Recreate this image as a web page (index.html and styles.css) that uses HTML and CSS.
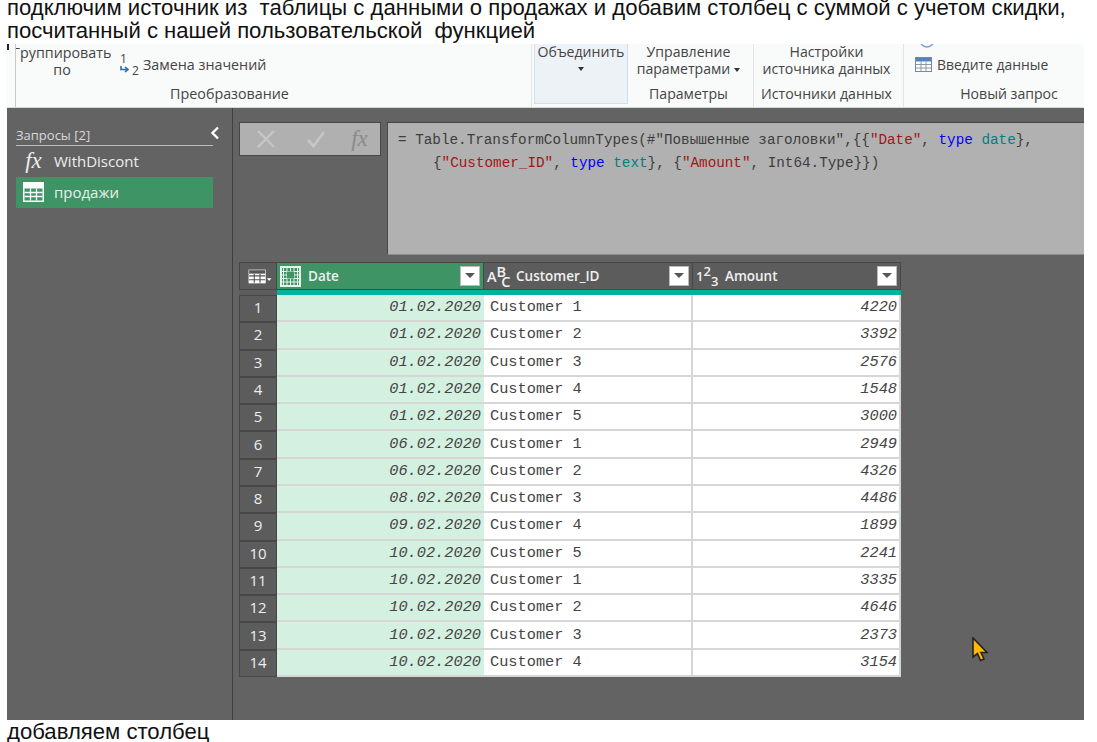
FILE: index.html
```html
<!DOCTYPE html>
<html lang="ru">
<head>
  <meta charset="UTF-8">
  <meta name="viewport" content="width=device-width, initial-scale=1.0">
  <title>Запросы</title>
  <link rel="stylesheet" href="styles.css">
</head>
<body>

<p class="intro">подключим источник из&nbsp; таблицы с данными о продажах и добавим столбец с суммой с учетом скидки, посчитанный с нашей пользовательской&nbsp; функцией</p>

<div class="shot">
  <span class="tick"></span>

  <!-- лента -->
  <div class="ribbon">
    <div class="group group-transform">
      <div class="group-body">
        <div class="btn-group">Группировать<br>по</div>
        <div class="btn-replace">
          <span class="replace-icon">
            <span class="d1">1</span>
            <svg class="replace-arrow" width="10" height="8" viewBox="0 0 10 8"><path d="M1 0v3.500h7M5 1l3 2.500-3 2.500" fill="none" stroke="#2b6cb0" stroke-width="1.6"/></svg>
            <span class="d2">2</span>
          </span>
          Замена значений
        </div>
      </div>
      <div class="group-label label-transform">Преобразование</div>
    </div>
    <div class="group group-merge">
      <div class="merge-btn">Объединить<span class="caret caret-block"></span></div>
    </div>
    <div class="group group-params">
      <div class="group-body center">Управление<br>параметрами<span class="caret"></span></div>
      <div class="group-label">Параметры</div>
    </div>
    <div class="group group-source">
      <div class="group-body center">Настройки<br>источника данных</div>
      <div class="group-label">Источники данных</div>
    </div>
    <div class="group group-new">
      <svg class="clip-icon" width="14" height="5" viewBox="0 0 14 5"><path d="M1 0q6 6 12 0" fill="none" stroke="#7d9cc4" stroke-width="1.5"/></svg>
      <div class="group-body enter">
        <svg width="17" height="15" viewBox="0 0 17 15"><rect x=".5" y=".5" width="16" height="14" fill="#fff" stroke="#7b8794"/><rect x="1" y="1" width="15" height="3.500" fill="#4a86c5"/><path d="M1 7.500h15M1 11h15M6 4.500v10M11 4.500v10" stroke="#8b98a6"/></svg>
        Введите данные
      </div>
      <div class="group-label label-new">Новый запрос</div>
    </div>
  </div>

  <div class="main">
    <!-- список запросов -->
    <div class="side">
      <div class="side-title">
        <span>Запросы [2]</span>
        <svg width="10" height="14" viewBox="0 0 10 14"><path d="M8 1.500 2.500 7 8 12.500" fill="none" stroke="#fff" stroke-width="2.400"/></svg>
      </div>
      <div class="query">
        <span class="fx">fx</span>
        <span>WithDiscont</span>
      </div>
      <div class="query active">
        <svg width="21" height="20" viewBox="0 0 21 20"><rect width="21" height="20" fill="#fff"/><path d="M1.500 6.500h18v12h-18z" fill="#3f9465"/><path d="M1.500 10.500h18M1.500 14.500h18M7.500 6.500v12M13.500 6.500v12" stroke="#fff" stroke-width="1.300"/></svg>
        <span>продажи</span>
      </div>
    </div>

    <div class="content">
      <div class="formula-row">
        <div class="formula-btns">
          <svg width="20" height="20" viewBox="0 0 20 20"><path d="M2 2l16 16M18 2 2 18" stroke="#c6c6c6" stroke-width="2.400"/></svg>
          <svg width="20" height="20" viewBox="0 0 20 20"><path d="M2 11l5.500 6L18 3" fill="none" stroke="#c6c6c6" stroke-width="2.800"/></svg>
          <span class="fx fx-off">fx</span>
        </div>
        <div class="formula">
          <div class="formula-line">= Table.TransformColumnTypes(#"Повышенные заголовки",{{<span class="str">"Date"</span>, <span class="kw">type</span> <span class="tp">date</span>},</div>
          <div class="formula-line indent">{<span class="str">"Customer_ID"</span>, <span class="kw">type</span> <span class="tp">text</span>}, {<span class="str">"Amount"</span>, Int64.Type}})</div>
        </div>
      </div>

      <div class="table">
        <div class="thead">
          <div class="th th-corner">
            <svg width="24" height="15" viewBox="0 0 21 13"><rect x=".5" y=".5" width="15" height="12" fill="#fff"/><rect x="1" y="1" width="14" height="3" fill="#555"/><path d="M1 6h14M1 9.300h14M5.500 4v8M10.500 4v8" stroke="#555"/><path d="M16.500 8h4l-2 2.500z" fill="#fff"/></svg>
          </div>
          <div class="th th-date">
            <svg width="21" height="21" viewBox="0 0 21 21"><rect width="21" height="21" fill="#e8f3ec"/><rect x="2" y="2" width="17" height="17" fill="#3f9465"/><path d="M3.500 2v17M7 2v17M10.500 2v17M14 2v17M17.500 2v17M2 5.500h17M2 9h17M2 12.500h17M2 16h17" stroke="#e8f3ec"/><rect x="7" y="5.500" width="7" height="7" fill="#3f9465"/></svg>
            <span class="th-name">Date</span>
            <span class="filter"></span>
          </div>
          <div class="th th-cust">
            <span class="type-abc"><span>A</span><span class="up">B</span><span class="down">C</span></span>
            <span class="th-name">Customer_ID</span>
            <span class="filter"></span>
          </div>
          <div class="th th-amount">
            <span class="type-num"><span>1</span><span class="up">2</span><span class="down">3</span></span>
            <span class="th-name">Amount</span>
            <span class="filter"></span>
          </div>
        </div>
        <div class="tbody">
          <div class="num">1</div><div class="date">01.02.2020</div><div class="cust">Customer 1</div><div class="amt">4220</div>
          <div class="num">2</div><div class="date">01.02.2020</div><div class="cust">Customer 2</div><div class="amt">3392</div>
          <div class="num">3</div><div class="date">01.02.2020</div><div class="cust">Customer 3</div><div class="amt">2576</div>
          <div class="num">4</div><div class="date">01.02.2020</div><div class="cust">Customer 4</div><div class="amt">1548</div>
          <div class="num">5</div><div class="date">01.02.2020</div><div class="cust">Customer 5</div><div class="amt">3000</div>
          <div class="num">6</div><div class="date">06.02.2020</div><div class="cust">Customer 1</div><div class="amt">2949</div>
          <div class="num">7</div><div class="date">06.02.2020</div><div class="cust">Customer 2</div><div class="amt">4326</div>
          <div class="num">8</div><div class="date">08.02.2020</div><div class="cust">Customer 3</div><div class="amt">4486</div>
          <div class="num">9</div><div class="date">09.02.2020</div><div class="cust">Customer 4</div><div class="amt">1899</div>
          <div class="num">10</div><div class="date">10.02.2020</div><div class="cust">Customer 5</div><div class="amt">2241</div>
          <div class="num">11</div><div class="date">10.02.2020</div><div class="cust">Customer 1</div><div class="amt">3335</div>
          <div class="num">12</div><div class="date">10.02.2020</div><div class="cust">Customer 2</div><div class="amt">4646</div>
          <div class="num">13</div><div class="date">10.02.2020</div><div class="cust">Customer 3</div><div class="amt">2373</div>
          <div class="num">14</div><div class="date">10.02.2020</div><div class="cust">Customer 4</div><div class="amt">3154</div>
        </div>
      </div>
    </div>
  </div>

  <svg class="cursor" width="18" height="26" viewBox="0 0 18 26"><path d="M1 1v19l4.500-3.500 3 7 3.500-1.500-3-6.500h6z" fill="#ffb900" stroke="#222" stroke-width="1.600"/></svg>
</div>

<p class="outro">добавляем столбец</p>

</body>
</html>
```

FILE: styles.css
```css
body {
    margin: 0;
    background-color: #fff;
    font-family: "Liberation Sans", Arial, sans-serif;
    color: #111;
    overflow: hidden;
}

.intro {
    margin: -4px 0 0 7px;
    width: 1075px;
    height: 48px;
    font-size: 22.120px;
    line-height: 23px;
}

.outro {
    margin: 2px 0 0 7px;
    font-size: 22.120px;
    line-height: 20px;
}

.shot {
    position: relative;
    margin-left: 7px;
    width: 1077px;
    height: 676px;
    background-color: #636363;
    font-family: "Open Sans", sans-serif;
    overflow: hidden;
}

.tick {
    position: absolute;
    left: 0;
    top: 0;
    width: 2px;
    height: 6px;
    background-color: #222;
}

/* лента */
.ribbon {
    display: flex;
    height: 63px;
    padding-left: 8px;
    background-color: #f9fafa;
    border-bottom: 1px solid #d8d8d8;
    font-size: 14.100px;
    line-height: 17px;
    color: #444;
}

.group {
    position: relative;
    display: flex;
    flex-direction: column;
    box-sizing: border-box;
    border-right: 1px solid #e2e4e6;
}

.group-transform {
    width: 517px;
    border-left: 1px solid #c9c9c9;
    overflow: hidden;
}

.group-merge {
    width: 96px;
    padding: 0 0 3px 2px;
    border-right: none;
}

.group-params {
    width: 126px;
    padding-right: 4px;
}

.group-source {
    width: 150px;
    padding-right: 4px;
}

.group-new {
    width: 180px;
    border-right: none;
}

.group-body {
    height: 41px;
    display: flex;
    white-space: nowrap;
}

.center {
    display: block;
    line-height: 16.500px;
    text-align: center;
}

.group-label {
    height: 22px;
    line-height: 18px;
    text-align: center;
    white-space: nowrap;
}

.label-transform {
    padding-right: 88px;
    font-size: 14.300px;
}

.label-new {
    padding-left: 30px;
}

.btn-group {
    flex-shrink: 0;
    width: 100px;
    margin-left: -4px;
    font-size: 14.300px;
    text-align: center;
}

.btn-replace {
    display: flex;
    align-items: center;
    gap: 3px;
    height: 41px;
    margin-left: 6px;
    font-size: 14.300px;
}

.replace-icon {
    position: relative;
    width: 22px;
    height: 26px;
    font-size: 12px;
    line-height: 12px;
}

.d1 {
    position: absolute;
    left: 2px;
    top: 1px;
}

.d2 {
    position: absolute;
    left: 14px;
    top: 13px;
}

.replace-arrow {
    position: absolute;
    left: 2px;
    top: 14px;
}

.merge-btn {
    height: 60px;
    box-sizing: border-box;
    background-color: #edf2f7;
    border: 1px solid #cfe0f0;
    border-top: none;
    line-height: 16.500px;
    text-align: center;
    white-space: nowrap;
}

.caret {
    display: inline-block;
    margin-left: 4px;
    vertical-align: middle;
    border-left: 3.500px solid transparent;
    border-right: 3.500px solid transparent;
    border-top: 4px solid #333;
}

.caret-block {
    display: block;
    width: 0;
    margin: 6px auto 0;
}

.clip-icon {
    position: absolute;
    left: 16px;
    top: 0;
}

.enter {
    align-items: center;
    gap: 5px;
    padding-left: 11px;
    font-size: 13.900px;
}

/* основная часть */
.main {
    display: flex;
    height: 612px;
}

.side {
    width: 226px;
    flex-shrink: 0;
    box-sizing: border-box;
    padding: 17px 19px 0 9px;
    border-right: 1px solid #404040;
    color: #fff;
}

.side-title {
    display: flex;
    justify-content: space-between;
    align-items: flex-start;
    height: 20px;
    border-bottom: 1px solid #bdbdbd;
    font-size: 13px;
    line-height: 20px;
    color: #d8d8d8;
}

.side-title svg {
    margin: 1px -7px 0 0;
}

.query {
    display: flex;
    align-items: center;
    gap: 10px;
    height: 31px;
    box-sizing: border-box;
    padding: 0 0 2px 7px;
    font-size: 15px;
    color: #eee;
}

.active {
    padding-bottom: 1px;
    background-color: #3f9465;
}

.fx {
    width: 21px;
    font-family: "Liberation Serif", serif;
    font-style: italic;
    font-size: 23px;
    text-align: center;
    color: #eee;
}

.content {
    flex: 1;
    padding: 14px 0 0 6px;
}

.formula-row {
    display: flex;
    gap: 6px;
    height: 133px;
}

.formula-btns {
    display: flex;
    align-items: center;
    gap: 30px;
    width: 142px;
    height: 34px;
    padding-left: 16px;
    box-sizing: border-box;
    background-color: #b0b0b0;
    border: 1px solid #474747;
}

.fx-off {
    margin-left: -7px;
    color: #8a8a8a;
}

.formula {
    flex: 1;
    padding-top: 6px;
    background-color: #b1b1b1;
    border: 1px solid #474747;
    border-bottom-color: #8c8c8c;
    border-right: none;
    font-family: "Liberation Mono", monospace;
    font-size: 14.300px;
    line-height: 23px;
    color: #3d3d3d;
}

.formula-line {
    padding-left: 10px;
    white-space: pre;
}

.indent {
    padding-left: 45px;
}

.str {
    color: #a31515;
}

.kw {
    color: #0000ff;
}

.tp {
    color: #008080;
}

/* таблица */
.table {
    width: 662px;
    margin-top: 7px;
}

.thead {
    display: grid;
    grid-template-columns: 38px 207px 209px 208px;
    height: 28px;
}

.th {
    display: flex;
    align-items: center;
    gap: 7px;
    padding: 0 3px;
    background-color: #5c5c5c;
    border: 1px solid #474747;
    border-left: none;
    box-sizing: border-box;
    font-size: 13.500px;
    font-weight: 600;
    color: #f0f0f0;
}

.th-corner {
    justify-content: center;
    padding: 0 0 0 3px;
    border-left: 1px solid #474747;
}

.th-date {
    background-color: #3f9465;
}

.th-name {
    flex: 1;
}

.filter {
    position: relative;
    width: 20px;
    height: 20px;
    background-color: #fff;
    border: 1px solid #bbb;
    box-sizing: border-box;
}

.filter::after {
    content: "";
    position: absolute;
    left: 4px;
    top: 6px;
    border-left: 5px solid transparent;
    border-right: 5px solid transparent;
    border-top: 5px solid #555;
}

.type-abc,
.type-num {
    display: flex;
    flex-shrink: 0;
    width: 22px;
    height: 24px;
    align-items: center;
    font-size: 14.500px;
    font-weight: 600;
    line-height: 11px;
}

.type-num {
    font-size: 13px;
}

.up {
    margin-bottom: 9px;
}

.down {
    margin-top: 11px;
}

.type-abc .down {
    margin-left: -5px;
}

.tbody {
    position: relative;
    display: grid;
    grid-template-columns: 38px 207px 209px 208px;
    grid-template-rows: repeat(14, 1fr);
    height: 387px;
    padding-top: 5px;
    background-color: #5c5c5c;
    box-sizing: border-box;
    font-family: "Liberation Mono", monospace;
    font-size: 15.300px;
    color: #444;
}

/* бирюзовая полоса над данными */
.tbody::before {
    content: "";
    position: absolute;
    left: 38px;
    right: 0;
    top: 0;
    height: 5px;
    background-color: #00b2a0;
}

.tbody > div {
    display: flex;
    align-items: center;
    box-sizing: border-box;
    padding: 0 2px 1px;
    background-color: #fff;
    border-bottom: 2px solid #d6d6d6;
    border-right: 2px solid #d6d6d6;
}

.tbody > .num {
    justify-content: center;
    padding: 0 0 3px;
    background-color: #5c5c5c;
    border: 1px solid #474747;
    font-family: "Open Sans", sans-serif;
    font-size: 15px;
    color: #eee;
}

.tbody > .date {
    justify-content: flex-end;
    padding-right: 3px;
    background-color: #d4f0e1;
    border-right: none;
    font-style: italic;
}

.tbody > .cust {
    padding-left: 6px;
}

.tbody > .amt {
    justify-content: flex-end;
    font-style: italic;
}

.cursor {
    position: absolute;
    left: 965px;
    top: 593px;
}
```
